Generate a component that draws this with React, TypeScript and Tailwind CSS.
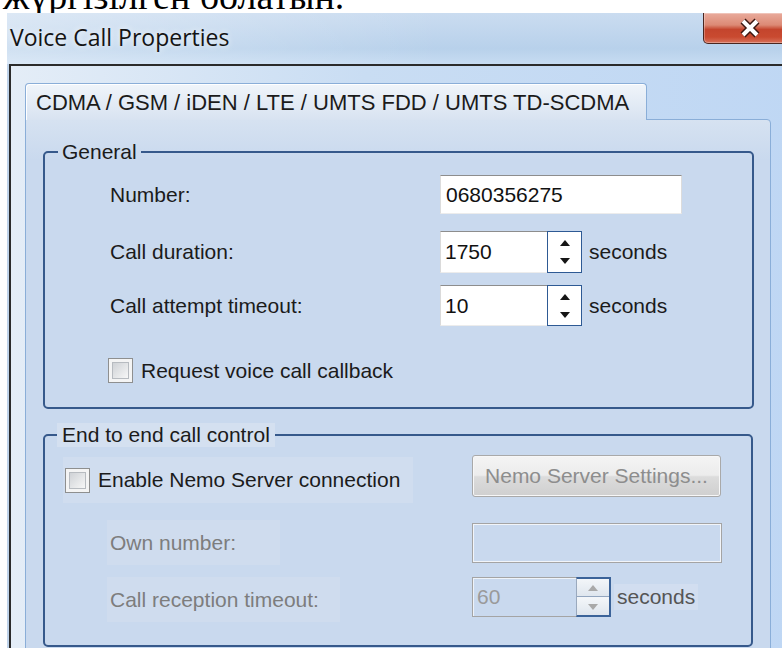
import React from 'react';

const uiFont = "font-['Liberation_Sans',Arial,sans-serif]";

const Arrow = ({ up, color }: { up: boolean; color: string }) => (
    <svg width="10" height="6" viewBox="0 0 10 6">
        <polygon points={up ? '5,0 10,6 0,6' : '0,0 10,0 5,6'} fill={color} />
    </svg>
);

const Checkbox: React.FC = () => (
    <span className="flex h-[25px] w-[25px] shrink-0 items-center justify-center border border-[#8e8f8f] bg-[#f4f4f4]">
        <span className="h-[17px] w-[17px] border border-[#b7bbc0] bg-gradient-to-br from-[#cfd2d6] to-[#f7f7f7]" />
    </span>
);

const SpinBox = ({ value, height }: { value: string; height: string }) => (
    <div className={`flex w-[142px] ${height}`}>
        <div className="flex flex-1 items-center border-t border-l border-b border-t-[#8d8d8d] border-l-[#dadada] border-b-[#ececec] bg-white pl-[4px] text-[#111]">
            {value}
        </div>
        <div className="flex w-[35px] flex-col items-center justify-center gap-[12px] border-[1.5px] border-[#2e5a94] bg-white">
            <Arrow up color="#161616" />
            <Arrow up={false} color="#161616" />
        </div>
    </div>
);

const DisabledSpin = () => (
    <div className="flex h-[40px] w-[139px]">
        <div className="flex flex-1 items-center border border-r-0 border-[#a4a4a4] bg-[#c9d9ee] pl-[4px] text-[#9a9a9a] shadow-[inset_1px_1px_0_#eef3f9]">
            60
        </div>
        <div className="flex w-[35px] flex-col border-2 border-l border-[#3b6399] border-l-[#9aa9bd]">
            <div className="flex flex-1 items-center justify-center border-b border-[#93a6bf] bg-gradient-to-b from-[#f3f6f9] to-[#dfe6ee]">
                <Arrow up color="#a9a9a9" />
            </div>
            <div className="flex flex-1 items-center justify-center border-t border-[#f2f5f9] bg-gradient-to-b from-[#f3f6f9] to-[#dfe6ee]">
                <Arrow up={false} color="#a9a9a9" />
            </div>
        </div>
    </div>
);

const TitleBar = () => (
    <div className="flex h-[51px] items-start bg-[linear-gradient(90deg,rgba(255,255,255,0.35),rgba(255,255,255,0)_55%),linear-gradient(180deg,#cadcf0,#b8d1eb_70%,#c7dcf2)]">
        <span className="mt-[10px] pl-[3px] font-['Open_Sans',sans-serif] text-[23px] leading-[28px] text-[#141414] [text-shadow:0_0_6px_#ffffff]">
            Voice Call Properties
        </span>
        <div className="ml-auto flex h-[31px] w-[94px] items-center justify-center rounded-b-[5px] border border-t-0 border-[#4a2620] bg-[linear-gradient(180deg,#e9ab9c_0%,#dc8a75_40%,#c4452d_55%,#c94a30_80%,#d8715a_100%)] shadow-[inset_0_0_0_1px_rgba(255,255,255,0.3)]">
            <svg width="24" height="20" viewBox="0 0 24 20">
                <path d="M5 3 L19 17 M19 3 L5 17" stroke="#3a1610" strokeWidth="7" />
                <path d="M5 3 L19 17 M19 3 L5 17" stroke="#ffffff" strokeWidth="4" />
            </svg>
        </div>
    </div>
);

const General = () => (
    <fieldset className="w-[711px] rounded-[5px] border-2 border-[#36598b] pb-[24px]">
        <legend className="ml-[13px] px-[4px] leading-[24px]">General</legend>
        <div className="mt-[11px] flex h-[39px] items-center">
            <span className="w-[395px] pl-[65px]">Number:</span>
            <div className="flex h-full w-[242px] items-center border-t border-x border-b border-t-[#8d8d8d] border-x-[#dcdcdc] border-b-[#ececec] bg-white pl-[5px] text-[#111]">
                0680356275
            </div>
        </div>
        <div className="mt-[17px] flex h-[42px] items-center">
            <span className="w-[395px] pl-[65px]">Call duration:</span>
            <SpinBox value="1750" height="h-[42px]" />
            <span className="ml-[7px]">seconds</span>
        </div>
        <div className="mt-[12px] flex h-[41px] items-center">
            <span className="w-[395px] pl-[65px]">Call attempt timeout:</span>
            <SpinBox value="10" height="h-[41px]" />
            <span className="ml-[7px]">seconds</span>
        </div>
        <div className="mt-[32px] flex h-[25px] items-center pl-[63px]">
            <Checkbox />
            <span className="ml-[8px]">Request voice call callback</span>
        </div>
    </fieldset>
);

const EndToEnd = () => (
    <fieldset className="mt-[14px] w-[710px] rounded-[5px] border-2 border-[#36598b] pb-[23px]">
        <legend className="ml-[12px] bg-[#d4e0f0] px-[5px] leading-[24px]">End to end call control</legend>
        <div className="mt-[8px] flex h-[48px]">
            <div className="w-[427px]">
                <div className="ml-[18px] mt-[2px] flex h-[46px] w-[350px] items-center bg-[#d0ddef] pl-[2px]">
                    <Checkbox />
                    <span className="ml-[8px]">Enable Nemo Server connection</span>
                </div>
            </div>
            <button
                type="button"
                disabled
                className="h-[42px] w-[249px] rounded-[3px] border border-[#a9a9a9] bg-[linear-gradient(180deg,#f4f4f4_0%,#ececec_48%,#dcdcdc_52%,#cfcfcf_100%)] text-[#8d8d8d] shadow-[inset_0_0_0_1px_#f7f7f7]"
            >
                Nemo Server Settings...
            </button>
        </div>
        <div className="mt-[17px] flex h-[45px] items-center">
            <div className="w-[427px]">
                <div className="ml-[62px] flex h-[45px] w-[173px] items-center bg-[#cfdcee] pl-[3px] text-[#7d7d7d]">
                    Own number:
                </div>
            </div>
            <div className="h-[40px] w-[250px] border border-[#a4a4a4] bg-[#c9d9ee] shadow-[inset_0_0_0_1px_#f2f5f9]" />
        </div>
        <div className="mt-[12px] flex h-[45px] items-start">
            <div className="w-[427px]">
                <div className="ml-[62px] flex h-[45px] w-[233px] items-center bg-[#cfdcee] pl-[3px] text-[#7d7d7d]">
                    Call reception timeout:
                </div>
            </div>
            <DisabledSpin />
            <span className="ml-[3px] mt-[7px] flex h-[26px] items-center bg-[#d2def0] px-[3px] text-[#555]">seconds</span>
        </div>
    </fieldset>
);

export default function App() {
    return (
        <div className={`relative h-[648px] w-[782px] overflow-hidden bg-white text-[21px] text-[#1b1b1b] ${uiFont}`}>
            {/* last line of the document text, cut off by the window */}
            <div className="h-[13px] overflow-hidden">
                <p className="-mt-[23px] pl-[3px] font-['Liberation_Serif','Times_New_Roman',serif] text-[38px] leading-none text-black">
                    жүргізілген болатын.
                </p>
            </div>
            <div className="ml-[7px] w-[790px]">
                <TitleBar />
                <div className="bg-[#bfd3ea] pl-[2px]">
                    <div className="h-[600px] border-l-2 border-t-2 border-[#2b2b2b] bg-[linear-gradient(90deg,#e4edf7,#c9ddf3_45%,#bfd7f4)] pl-[14px] pt-[17px]">
                        <div className="relative z-10 flex h-[37px] w-[622px] items-center rounded-t-[4px] border-x border-t border-[#8aaed8] bg-gradient-to-b from-[#f0f5fa] to-[#d8e3f1] pl-[10px] text-[22px] shadow-[inset_1px_1px_0_#ffffff]">
                            CDMA / GSM / iDEN / LTE / UMTS FDD / UMTS TD-SCDMA
                        </div>
                        <div className="-mt-px h-[560px] w-[746px] rounded-tr-[4px] border border-[#8aaed8] bg-[linear-gradient(180deg,#d6e2f1,#c9d9ee_40px)] pl-[17px] pt-[20px]">
                            <General />
                            <EndToEnd />
                        </div>
                    </div>
                </div>
            </div>
        </div>
    );
}
